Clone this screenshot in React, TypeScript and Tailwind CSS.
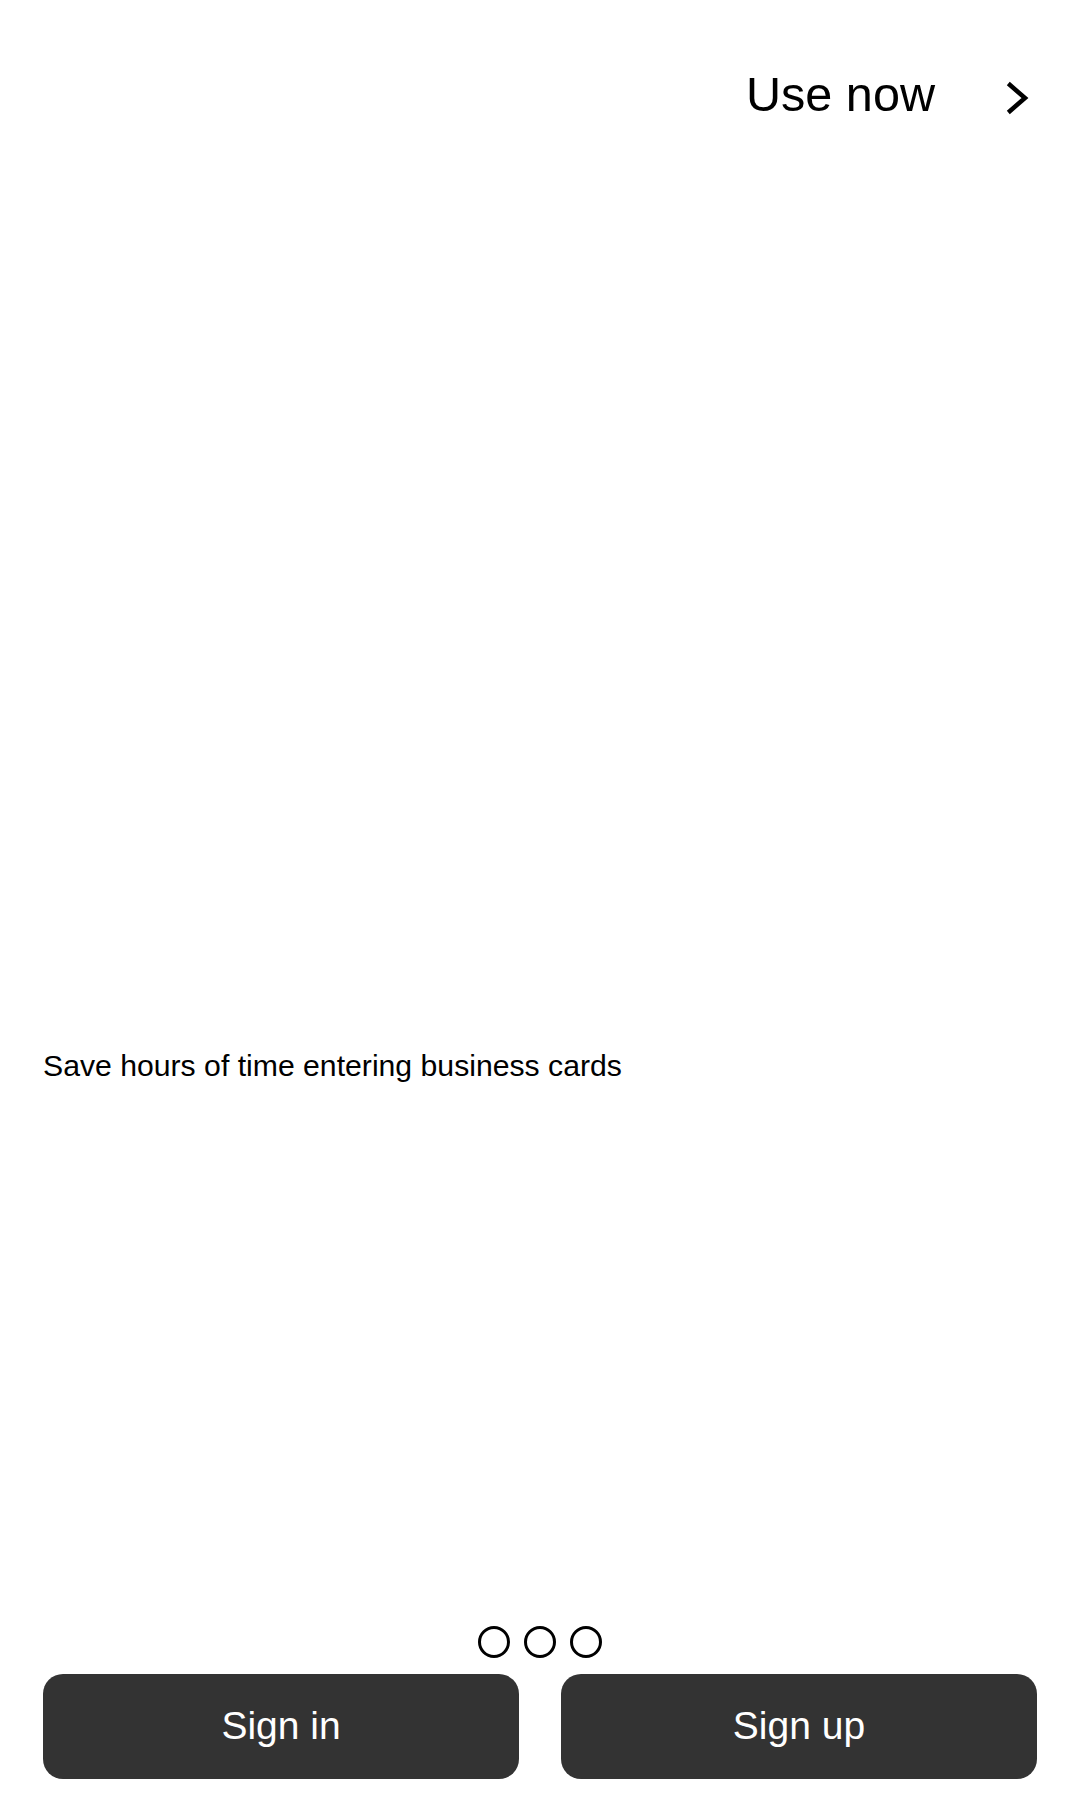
export default function App() {
  const dots = [0, 1, 2];

  return (
    <div className="flex min-h-[1800px] w-full flex-col bg-white font-['Liberation_Sans',Arial,sans-serif] text-black">
      <header className="flex items-start justify-end pt-[70px] pr-[51px]">
        <button className="text-[48.6px] leading-none">Use now</button>
        <svg
          width="24"
          height="36"
          viewBox="0 0 24 36"
          className="ml-[70px] mt-[10px]"
          fill="none"
          stroke="black"
          strokeWidth="4.5"
          strokeLinecap="square"
        >
          <polyline points="5,5 20,18 5,31" />
        </svg>
      </header>

      <section className="flex flex-1 flex-col px-[43px]">
        <p className="mt-[932px] text-[30.2px] leading-none">
          Save hours of time entering business cards
        </p>
      </section>

      <div className="mb-[16px] flex justify-center gap-[14px]">
        {dots.map((d) => (
          <span
            key={d}
            className="h-[32px] w-[32px] rounded-full border-[3px] border-black"
          />
        ))}
      </div>

      <div className="grid grid-cols-2 gap-[42px] px-[43px] pb-[21px]">
        <button className="h-[105px] rounded-[20px] bg-[#333333] text-[39px] text-white">
          Sign in
        </button>
        <button className="h-[105px] rounded-[20px] bg-[#333333] text-[39px] text-white">
          Sign up
        </button>
      </div>
    </div>
  );
}
